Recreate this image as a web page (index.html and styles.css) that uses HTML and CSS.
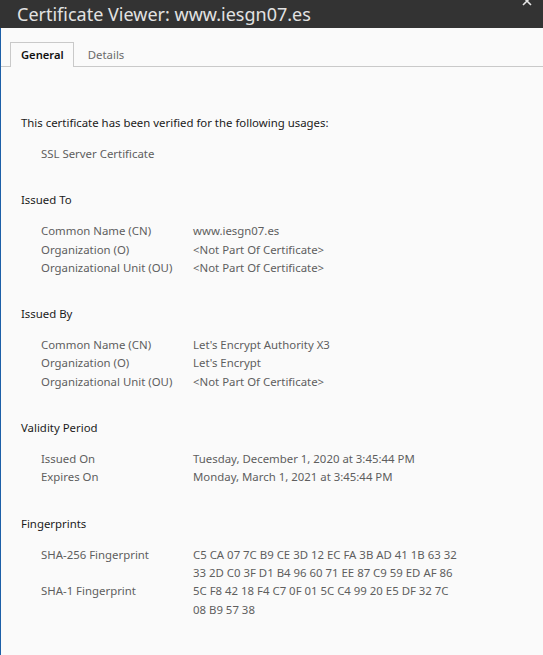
FILE: index.html
```html
<!DOCTYPE html>
<html lang="en">
<head>
<meta charset="utf-8">
<title>Certificate Viewer</title>
<link rel="stylesheet" href="styles.css">
</head>
<body>
<div class="window">
  <header class="titlebar">
    <span class="title">Certificate Viewer: www.iesgn07.es</span>
    <svg class="close" width="10" height="8" viewBox="0 0 10 8"><path d="M1 -3 L9 5 M9 -3 L1 5" stroke="#e6e6e6" stroke-width="1.6" fill="none"/></svg>
  </header>
  <div class="body">
    <nav class="tabs">
      <span class="tab active">General</span>
      <span class="tab">Details</span>
    </nav>
    <main class="content">
      <section class="section">
        <h2 class="heading">This certificate has been verified for the following usages:</h2>
        <div class="rows">
          <div class="row"><span class="label">SSL Server Certificate</span></div>
        </div>
      </section>
      <section class="section">
        <h2 class="heading">Issued To</h2>
        <div class="rows">
          <div class="row"><span class="label">Common Name (CN)</span><span class="value">www.iesgn07.es</span></div>
          <div class="row"><span class="label">Organization (O)</span><span class="value">&lt;Not Part Of Certificate&gt;</span></div>
          <div class="row"><span class="label">Organizational Unit (OU)</span><span class="value">&lt;Not Part Of Certificate&gt;</span></div>
        </div>
      </section>
      <section class="section">
        <h2 class="heading">Issued By</h2>
        <div class="rows">
          <div class="row"><span class="label">Common Name (CN)</span><span class="value">Let's Encrypt Authority X3</span></div>
          <div class="row"><span class="label">Organization (O)</span><span class="value">Let's Encrypt</span></div>
          <div class="row"><span class="label">Organizational Unit (OU)</span><span class="value">&lt;Not Part Of Certificate&gt;</span></div>
        </div>
      </section>
      <section class="section">
        <h2 class="heading">Validity Period</h2>
        <div class="rows">
          <div class="row"><span class="label">Issued On</span><span class="value">Tuesday, December 1, 2020 at 3:45:44 PM</span></div>
          <div class="row"><span class="label">Expires On</span><span class="value">Monday, March 1, 2021 at 3:45:44 PM</span></div>
        </div>
      </section>
      <section class="section">
        <h2 class="heading">Fingerprints</h2>
        <div class="rows">
          <div class="row"><span class="label">SHA-256 Fingerprint</span><span class="value hash">C5 CA 07 7C B9 CE 3D 12 EC FA 3B AD 41 1B 63 32 33 2D C0 3F D1 B4 96 60 71 EE 87 C9 59 ED AF 86</span></div>
          <div class="row"><span class="label">SHA-1 Fingerprint</span><span class="value hash">5C F8 42 18 F4 C7 0F 01 5C C4 99 20 E5 DF 32 7C 08 B9 57 38</span></div>
        </div>
      </section>
    </main>
  </div>
</div>
</body>
</html>
```

FILE: styles.css
```css
html, body {
  margin: 0;
  padding: 0;
  background: #fafafa;
}
body {
  font-family: "Noto Sans", "DejaVu Sans", sans-serif;
  font-size: 11.4px;
  width: 543px;
  height: 655px;
  overflow: hidden;
}
.window {
  display: flex;
  flex-direction: column;
  height: 655px;
}
.titlebar {
  height: 28px;
  background: #333333;
  display: flex;
  align-items: center;
  padding-left: 17px;
  position: relative;
  flex: none;
}
.title {
  color: #e2e2e2;
  font-size: 18px;
  line-height: 28px;
}
.close {
  position: absolute;
  top: 0;
  right: 11px;
}
.body {
  flex: 1;
  border-left: 1.5px solid #1c5fa8;
}
.tabs {
  display: flex;
  margin-top: 14px;
  padding-left: 9px;
  border-bottom: 1px solid #c9c9c9;
  height: 24px;
}
.tab {
  display: flex;
  align-items: center;
  padding: 0 11px 1px 13px;
  color: #6b6b6b;
  font-size: 11.4px;
  border: 1px solid transparent;
  border-bottom: none;
  margin-bottom: -1px;
}
.tab.active {
  color: #111;
  font-weight: 600;
  font-size: 11.2px;
  background: #fafafa;
  border-color: #c9c9c9;
  padding: 0 9px 1px 10px;
}
.content {
  padding: 47px 0 0 20px;
}
.section {
  margin-bottom: 28px;
}
.heading {
  margin: 0;
  font-size: 11.4px;
  font-weight: 400;
  color: #1b1b1b;
  line-height: 18px;
}
.rows {
  margin-top: 13px;
  padding-left: 20px;
}
.row {
  display: flex;
  line-height: 18.3px;
  color: #5e5e5e;
}
.label {
  width: 152px;
  flex: none;
}
.value {
  width: 266px;
}
```
